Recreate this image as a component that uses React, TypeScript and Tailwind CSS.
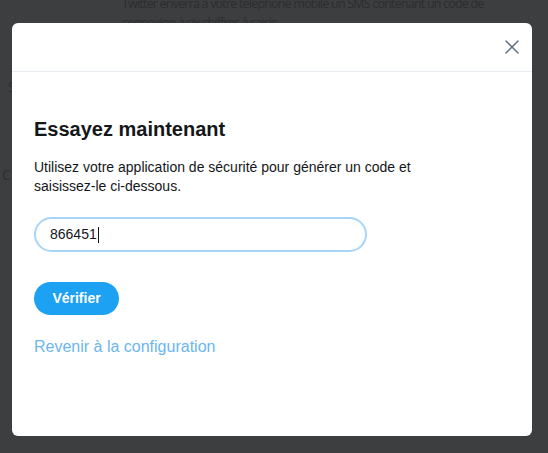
import { X } from "lucide-react";

export default function App() {
  return (
    <div
      className="relative h-[453px] w-[548px] overflow-hidden bg-[#3d3e40]"
      style={{ fontFamily: '"Liberation Sans", Arial, sans-serif' }}
    >
      {/* page behind the overlay */}
      <div
        className="select-none whitespace-nowrap text-[12px] leading-[19px] text-[#2c2d2f]"
        style={{ fontFamily: '"Open Sans", "Liberation Sans", sans-serif' }}
      >
        <p className="-mt-[6px] pl-[122px] text-[12.5px] tracking-[-0.8px]">
          Twitter enverra à votre téléphone mobile un SMS contenant un code de
          <br />
          connexion à six chiffres à saisir.
        </p>
        <p className="mt-[45px] pl-[8px] text-[14px]">S</p>
        <p className="mt-[69px] pl-[2px] text-[14px]">C</p>
      </div>

      {/* modal */}
      <div className="absolute left-[12px] top-[23px] flex h-[413px] w-[520px] flex-col rounded-[6px] bg-white">
        <div className="flex h-[49px] shrink-0 items-center justify-end border-b border-[#e6ecf0] pr-[8px]">
          <button className="flex h-[24px] w-[24px] items-center justify-center text-[#5b7083]">
            <X size={24} strokeWidth={1.5} />
          </button>
        </div>

        <div className="flex flex-col px-[22px] pt-[45px]">
          <h2 className="text-[20px] font-bold leading-[24px] text-[#14171a]">
            Essayez maintenant
          </h2>
          <p className="mt-[17px] w-[420px] text-[14px] leading-[19px] text-[#14171a]">
            Utilisez votre application de sécurité pour générer un code et
            saisissez-le ci-dessous.
          </p>

          <div className="mt-[21px] flex h-[35px] w-[333px] items-center rounded-full border-2 border-[#a6d5f7] px-[14px] text-[14px] text-[#14171a]">
            866451
            <span className="ml-[1px] inline-block h-[16px] w-px bg-[#14171a]" />
          </div>

          <button className="mt-[30px] flex h-[33px] w-[85px] items-center justify-center rounded-full bg-[#1da1f2] text-[14px] font-bold text-white">
            Vérifier
          </button>

          <a className="mt-[22px] text-[16px] leading-[20px] text-[#6cb6f1]">
            Revenir à la configuration
          </a>
        </div>
      </div>
    </div>
  );
}
